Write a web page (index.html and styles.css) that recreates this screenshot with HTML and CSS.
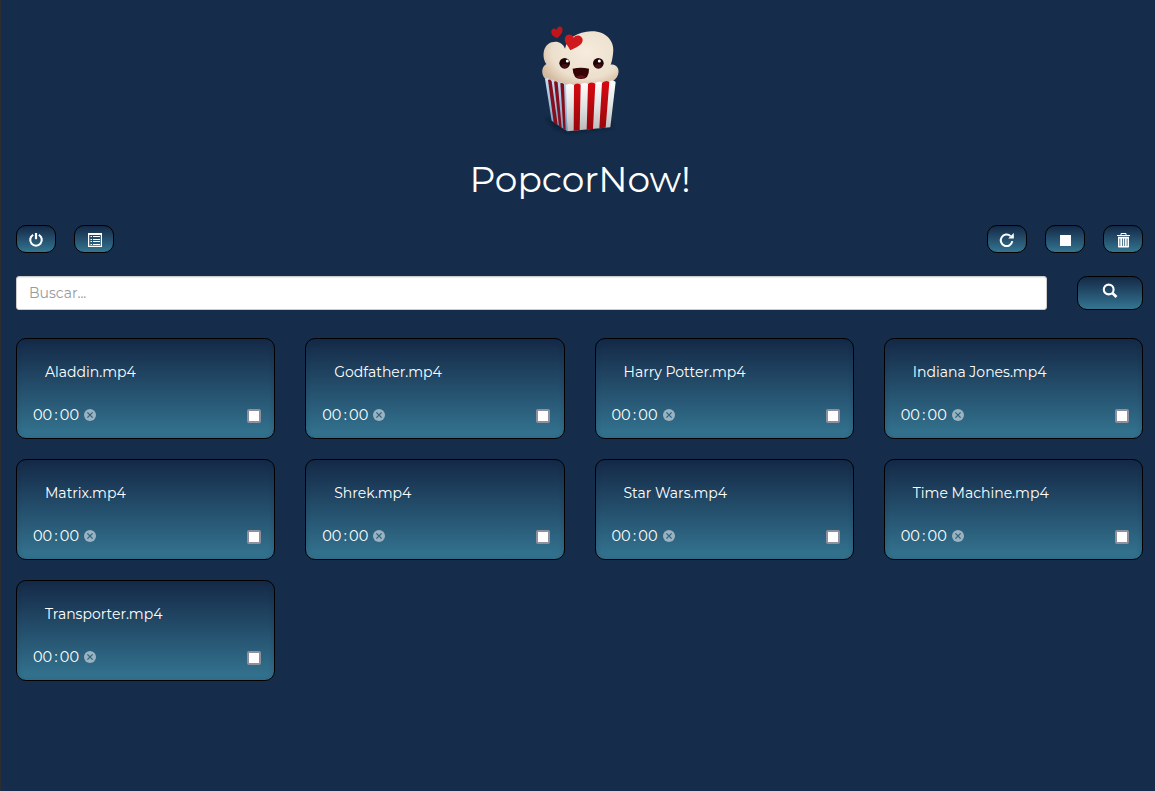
FILE: index.html
```html
<!DOCTYPE html>
<html lang="es">
<head>
<meta charset="utf-8">
<title>PopcorNow!</title>
<link rel="stylesheet" href="styles.css">
</head>
<body>
<svg class="defs" width="0" height="0" aria-hidden="true">
  <symbol id="remove" viewBox="0 0 12 12"><circle cx="6" cy="6" r="6" fill="#9bb3c1"/><path d="M3.4 3.4l5.2 5.2M8.6 3.4l-5.2 5.2" stroke="#2e6380" stroke-width="1.3"/></symbol>
</svg>
<header class="header">
  <svg class="logo" viewBox="0 0 300 375" role="img" aria-label="Popcorn">
    <defs>
      <radialGradient id="corn" cx=".58" cy=".35" r=".65"><stop offset="0" stop-color="#f6ecdd"/><stop offset=".7" stop-color="#ecdfcd"/><stop offset="1" stop-color="#d3b99d"/></radialGradient>
      <linearGradient id="white" x2="0" y2="1"><stop offset="0" stop-color="#fff"/><stop offset=".5" stop-color="#e3e3e3"/><stop offset="1" stop-color="#b9b9bb"/></linearGradient>
      <linearGradient id="red" x2="0" y2="1"><stop offset="0" stop-color="#d80a10"/><stop offset="1" stop-color="#96060b"/></linearGradient>
      <linearGradient id="side" x2="0" y2="1"><stop offset="0" stop-color="#c5def3"/><stop offset="1" stop-color="#7698b8"/></linearGradient>
      <filter id="soft" x="-30%" y="-80%" width="160%" height="260%"><feGaussianBlur stdDeviation="5"/></filter>
    </defs>
    <path d="M45 310L75 342L115 354L248 340V325Z" fill="#0b1c33" opacity=".7" filter="url(#soft)"/>
    <path d="M50 195C33 183 32 156 49 147C35 128 38 90 65 82C82 77 98 83 105 101C111 71 143 50 184 49C229 48 256 80 249 117C247 132 245 143 242 149C260 146 270 163 264 179C260 191 250 198 243 200V225H55Z" fill="url(#corn)"/>
    <path d="M45 192Q53 185 61 196Q68 190 75 200Q82 195 88 203Q96 199 103 207L112 209V349L97 339L65 317Z" fill="url(#side)"/>
    <path d="M54 195Q60 191 65 199L83 330L71 323ZM72 200Q78 197 83 202L95 338L87 333ZM91 205Q96 202 102 208L107 345L100 342Z" fill="#850d1d"/>
    <path d="M108 211Q118 202 130 210Q141 202 152 208Q163 200 174 207Q185 199 196 204Q207 197 218 203Q229 195 238 200Q248 193 257 201L241 337L112 349Z" fill="url(#white)"/>
    <path d="M132 210Q142 202 152 209L149 346L131 347ZM174 207Q185 199 196 206L189 342L170 344ZM216 204Q228 194 238 201L227 338L208 340Z" fill="url(#red)"/>
    <circle cx="104" cy="145" r="16" fill="#210305"/><ellipse cx="104" cy="153" rx="10" ry="6" fill="#421015"/><circle cx="112" cy="138" r="4.5" fill="#fff"/>
    <circle cx="205" cy="145" r="16" fill="#210305"/><ellipse cx="205" cy="153" rx="10" ry="6" fill="#421015"/><circle cx="208" cy="138" r="4.5" fill="#fff"/>
    <path d="M128 161Q153 156 177 161Q178 192 153 192Q129 192 128 161Z" fill="#350306"/><path d="M137 185Q152 176 168 185Q153 194 137 185Z" fill="#65101a"/>
    <path d="M82 69C72 66 61 58 64 47C67 38 77 39 80 45C81 34 91 31 96 38C102 48 92 61 82 69Z" fill="#bd151a"/>
    <path d="M121 106C115 91 101 83 105 68C110 54 127 57 131 68C139 56 158 62 158 75C158 91 137 97 121 106Z" fill="#ce191d"/>
  </svg>
  <h1 class="title">PopcorNow!</h1>
</header>
<main class="main">
  <div class="toolbar">
    <div class="group">
      <button class="btn" aria-label="Apagar"><svg viewBox="0 0 16 16"><path d="M5.2 2.8A5.8 5.8 0 1 0 10.8 2.8" fill="none" stroke="#fff" stroke-width="2.1"/><path d="M8 1v6.2" stroke="#fff" stroke-width="2.2"/></svg></button>
      <button class="btn" aria-label="Lista"><svg class="list" viewBox="0 0 16 16"><path fill-rule="evenodd" d="M1 1h14v14H1zM2.2 3v10.8h11.6V3z" fill="#fff"/><path d="M3.5 4.5h1.5M3.5 7.5h1.5M3.5 9.5h1.5M3.5 12.5h1.5M6 4.5h7M6 7.5h7M6 9.5h7M6 12.5h7" stroke="#fff" stroke-width="1"/></svg></button>
    </div>
    <div class="group">
      <button class="btn" aria-label="Recargar"><svg viewBox="0 0 16 16"><path d="M11.6 4.1A5.8 5.8 0 1 0 13.3 9.2" fill="none" stroke="#fff" stroke-width="2"/><path d="M14.8 1v5.6H9.2z" fill="#fff"/></svg></button>
      <button class="btn" aria-label="Detener"><svg viewBox="0 0 16 16"><path d="M3 3h11v11H3z" fill="#fff"/></svg></button>
      <button class="btn" aria-label="Borrar"><svg viewBox="0 0 16 16"><path d="M2 3.5h13M6 3V1.5h5V3" fill="none" stroke="#fff" stroke-width="1"/><path fill-rule="evenodd" d="M3 4.7h11v10.3l-.6.6H3.6L3 15zM4.5 6.5v7.5h.8V6.5zM7 6.5v7.5h.8V6.5zM9.3 6.5v7.5h.8V6.5zM11.7 6.5v7.5h.8V6.5z" fill="#fff"/></svg></button>
    </div>
  </div>
  <form class="search">
    <input class="field" type="text" placeholder="Buscar..." aria-label="Buscar">
    <button class="btn btn-search" type="button" aria-label="Buscar"><svg viewBox="0 0 16 16"><circle cx="6.7" cy="6.5" r="4.9" fill="none" stroke="#fff" stroke-width="2.1"/><path d="M10.1 9.8l4.4 4.2" stroke="#fff" stroke-width="2.7"/></svg></button>
  </form>
  <section class="grid">
    <article class="card"><h2 class="name">Aladdin.mp4</h2><div class="row"><span class="time"><span>00</span><span>:</span><span>00</span></span><svg class="clear"><use href="#remove"/></svg><span class="check"></span></div></article>
    <article class="card"><h2 class="name">Godfather.mp4</h2><div class="row"><span class="time"><span>00</span><span>:</span><span>00</span></span><svg class="clear"><use href="#remove"/></svg><span class="check"></span></div></article>
    <article class="card"><h2 class="name">Harry Potter.mp4</h2><div class="row"><span class="time"><span>00</span><span>:</span><span>00</span></span><svg class="clear"><use href="#remove"/></svg><span class="check"></span></div></article>
    <article class="card"><h2 class="name">Indiana Jones.mp4</h2><div class="row"><span class="time"><span>00</span><span>:</span><span>00</span></span><svg class="clear"><use href="#remove"/></svg><span class="check"></span></div></article>
    <article class="card"><h2 class="name">Matrix.mp4</h2><div class="row"><span class="time"><span>00</span><span>:</span><span>00</span></span><svg class="clear"><use href="#remove"/></svg><span class="check"></span></div></article>
    <article class="card"><h2 class="name">Shrek.mp4</h2><div class="row"><span class="time"><span>00</span><span>:</span><span>00</span></span><svg class="clear"><use href="#remove"/></svg><span class="check"></span></div></article>
    <article class="card"><h2 class="name">Star Wars.mp4</h2><div class="row"><span class="time"><span>00</span><span>:</span><span>00</span></span><svg class="clear"><use href="#remove"/></svg><span class="check"></span></div></article>
    <article class="card"><h2 class="name">Time Machine.mp4</h2><div class="row"><span class="time"><span>00</span><span>:</span><span>00</span></span><svg class="clear"><use href="#remove"/></svg><span class="check"></span></div></article>
    <article class="card"><h2 class="name">Transporter.mp4</h2><div class="row"><span class="time"><span>00</span><span>:</span><span>00</span></span><svg class="clear"><use href="#remove"/></svg><span class="check"></span></div></article>
  </section>
</main>
</body>
</html>
```
FILE: styles.css
```css
* { box-sizing: border-box; }
body {
  margin: 0;
  min-height: 791px;
  border-left: 1px solid #2b2d2e;
  background: #152d4a;
  color: #fff;
  font-family: Montserrat, Inter, sans-serif;
}
.defs { position: absolute; }
.header {
  display: flex;
  flex-direction: column;
  align-items: center;
  height: 225px;
  padding: 15px 0 0 4px;
}
.logo { width: 100px; height: 125px; flex: none; }
.title {
  margin: 19px 0 0;
  font-size: 36px;
  font-weight: 400;
  line-height: 40px;
}
.main { padding: 0 12px 0 15px; }
.toolbar, .group, .search, .row, .time { display: flex; }
.toolbar { justify-content: space-between; }
.group { gap: 18px; }
.btn {
  display: flex;
  align-items: center;
  justify-content: center;
  width: 40px;
  height: 28px;
  padding: 2px 0 0;
  border: 1px solid #000;
  border-radius: 10px;
  background: linear-gradient(#142947, #347591);
}
.btn svg { width: 16px; height: 16px; }
.btn .list { margin-left: 2px; }
.search { gap: 30px; margin-top: 23px; }
.field {
  flex: 1;
  height: 34px;
  padding: 0 12px;
  border: 1px solid #ccc;
  border-radius: 3px;
  background: #fff;
  box-shadow: inset 0 1px 1px rgba(0, 0, 0, .075);
  font: 14px/20px Montserrat, Inter, sans-serif;
}
.field::placeholder { color: #999; opacity: 1; }
.btn-search { width: 66px; height: 34px; padding: 0 0 4px; }
.grid {
  display: grid;
  grid-template-columns: repeat(4, 1fr);
  gap: 20px 30px;
  margin-top: 28px;
}
.card {
  height: 101px;
  padding: 23px 13.2px 0 16px;
  border: 1px solid #000;
  border-radius: 10px;
  background: linear-gradient(#142947, #347591);
  box-shadow: inset 0 0 5px rgba(20, 41, 71, .25);
}
.name {
  margin: 0 0 0 12px;
  font-size: 14px;
  font-weight: 400;
  line-height: 20px;
}
.row { align-items: center; height: 20px; margin-top: 23px; }
.time { width: 46px; justify-content: space-between; font-size: 14.5px; line-height: 20px; }
.clear { width: 12px; height: 12px; margin-left: 5px; }
.check {
  width: 14px;
  height: 14px;
  margin: 2px 0 0 auto;
  border: 2px solid #8f8f9d;
  border-radius: 2px;
  background: #fff;
}
```
